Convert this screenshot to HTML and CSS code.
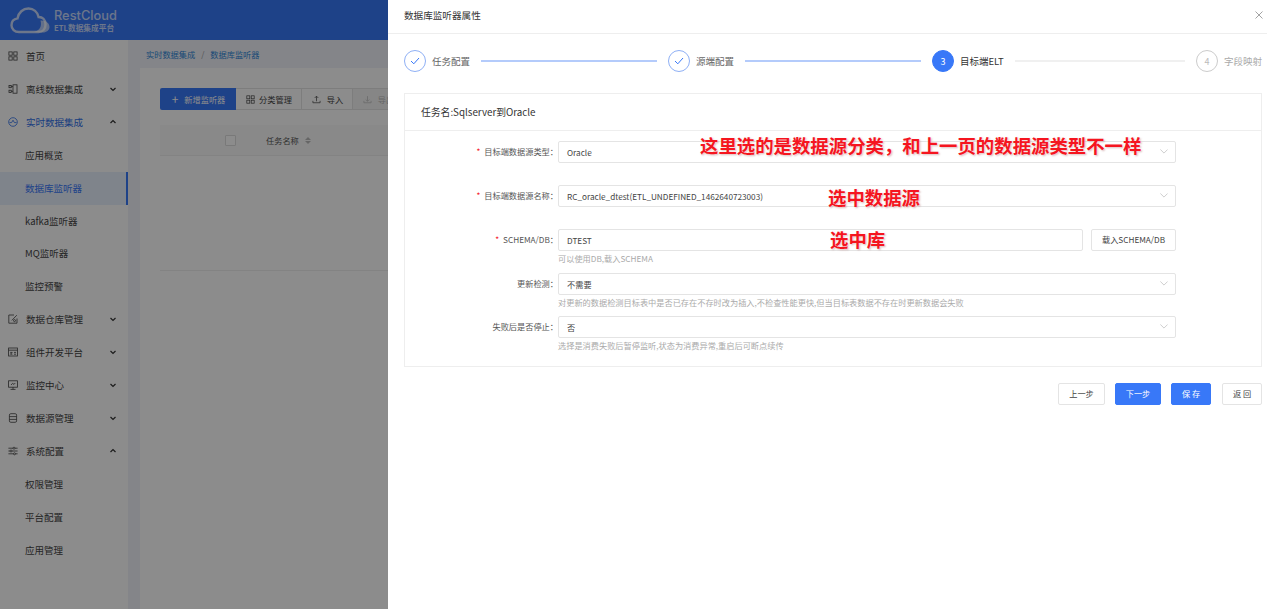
FILE: index.html
```html
<!DOCTYPE html>
<html lang="zh-CN">
<head>
    <meta charset="UTF-8">
    <meta name="viewport" content="width=device-width, initial-scale=1.0">
    <title>数据库监听器属性</title>
    <link rel="stylesheet" href="styles.css">
</head>
<body>
    <div class="app">
        <header class="topbar">
            <svg class="logo" width="40" height="27" viewBox="0 0 40 27" fill="none">
                <path d="M9 25C4.5 25 1.5 22 1.5 18.2C1.5 14.5 4 12 7.5 11.4C8.5 5.5 13 1.5 18.5 1.5C23.5 1.5 27.5 4.8 28.6 10C32.5 10 35.5 12.5 35.5 17.5C35.5 22 32.5 25 28.5 25Z" stroke="#fff" stroke-opacity=".72" stroke-width="2.4"/>
                <path d="M24 25C30 23.5 32 19 30.5 13.5C35.5 13 39.5 16 39.5 20C39.5 23 36.5 25.5 33 25.5Z" fill="#fff" fill-opacity=".62"/>
            </svg>
            <div class="brand">
                <div class="brand-name">RestCloud</div>
                <div class="brand-sub">ETL数据集成平台</div>
            </div>
        </header>
        <div class="layout">
            <nav class="sidebar">
                <a class="nav-item">
                    <svg class="nav-icon" viewBox="0 0 10 10" fill="none" stroke="currentColor" stroke-width=".8"><rect x=".9" y=".9" width="3.3" height="3.3"/><rect x="5.8" y=".9" width="3.3" height="3.3"/><rect x=".9" y="5.8" width="3.3" height="3.3"/><rect x="5.8" y="5.8" width="3.3" height="3.3"/></svg>
                    <span>首页</span>
                </a>
                <a class="nav-item">
                    <svg class="nav-icon" viewBox="0 0 10 10" fill="none" stroke="currentColor" stroke-width=".8"><rect x="5" y=".8" width="4" height="8.4"/><rect x="1" y="1.5" width="2.2" height="2.2"/><rect x="1" y="6.2" width="2.2" height="2.2"/><path d="M3.2 2.6H5M3.2 7.3H5"/></svg>
                    <span>离线数据集成</span>
                    <svg class="chevron" viewBox="0 0 8 8"><path d="M1.5 3L4 5.5L6.5 3"/></svg>
                </a>
                <a class="nav-item is-open">
                    <svg class="nav-icon" viewBox="0 0 10 10" fill="none" stroke="currentColor" stroke-width=".8"><circle cx="5" cy="5" r="4.3"/><path d="M1.5 5.6L3.6 5.6L5 3.2L6.4 5.6L8.5 5.6"/></svg>
                    <span>实时数据集成</span>
                    <svg class="chevron" viewBox="0 0 8 8"><path d="M1.5 5L4 2.5L6.5 5"/></svg>
                </a>
                <a class="nav-child">应用概览</a>
                <a class="nav-child is-active">数据库监听器</a>
                <a class="nav-child">kafka监听器</a>
                <a class="nav-child">MQ监听器</a>
                <a class="nav-child">监控预警</a>
                <a class="nav-item">
                    <svg class="nav-icon" viewBox="0 0 10 10" fill="none" stroke="currentColor" stroke-width=".8"><path d="M9 4.5V9.2H.8V1H6"/><path d="M3.8 6.4L8.8 1.2"/><circle cx="6.5" cy="6.6" r="1"/></svg>
                    <span>数据仓库管理</span>
                    <svg class="chevron" viewBox="0 0 8 8"><path d="M1.5 3L4 5.5L6.5 3"/></svg>
                </a>
                <a class="nav-item">
                    <svg class="nav-icon" viewBox="0 0 10 10" fill="none" stroke="currentColor" stroke-width=".8"><rect x=".6" y="1" width="8.8" height="8"/><path d="M.6 3.2H9.4M2.2 5.4H4.2L2.4 7.2H4.4M6 5.4H8M6 7.2H8"/></svg>
                    <span>组件开发平台</span>
                    <svg class="chevron" viewBox="0 0 8 8"><path d="M1.5 3L4 5.5L6.5 3"/></svg>
                </a>
                <a class="nav-item">
                    <svg class="nav-icon" viewBox="0 0 10 10" fill="none" stroke="currentColor" stroke-width=".8"><rect x=".6" y=".8" width="8.8" height="6.4"/><path d="M2.5 9.4H7.5M5 7.2V9.4M3 5L4.5 3.4L6 4.4L7.2 3"/></svg>
                    <span>监控中心</span>
                    <svg class="chevron" viewBox="0 0 8 8"><path d="M1.5 3L4 5.5L6.5 3"/></svg>
                </a>
                <a class="nav-item">
                    <svg class="nav-icon" viewBox="0 0 10 10" fill="none" stroke="currentColor" stroke-width=".8"><rect x="1.4" y=".7" width="7.2" height="8.6" rx="1.4"/><path d="M1.4 3.6H8.6M1.4 6.4H8.6"/></svg>
                    <span>数据源管理</span>
                    <svg class="chevron" viewBox="0 0 8 8"><path d="M1.5 3L4 5.5L6.5 3"/></svg>
                </a>
                <a class="nav-item">
                    <svg class="nav-icon" viewBox="0 0 10 10" fill="none" stroke="currentColor" stroke-width=".8"><path d="M.4 2.2H5M7 2.2H9.6M.4 5H2M4 5H9.6M.4 7.8H5.5M7.5 7.8H9.6"/><circle cx="6" cy="2.2" r="1"/><circle cx="3" cy="5" r="1"/><circle cx="6.5" cy="7.8" r="1"/></svg>
                    <span>系统配置</span>
                    <svg class="chevron" viewBox="0 0 8 8"><path d="M1.5 5L4 2.5L6.5 5"/></svg>
                </a>
                <a class="nav-child">权限管理</a>
                <a class="nav-child">平台配置</a>
                <a class="nav-child">应用管理</a>
            </nav>
            <main class="content">
                <div class="breadcrumb">
                    <span>实时数据集成</span>
                    <span class="crumb-sep">/</span>
                    <span>数据库监听器</span>
                </div>
                <section class="panel">
                    <div class="toolbar">
                        <button class="tool tool-primary"><span class="tool-plus">+</span>新增监听器</button>
                        <button class="tool">
                            <svg class="tool-icon" viewBox="0 0 10 10" fill="none" stroke="currentColor" stroke-width=".8"><rect x=".9" y=".9" width="3.3" height="3.3"/><rect x="5.8" y=".9" width="3.3" height="3.3"/><rect x=".9" y="5.8" width="3.3" height="3.3"/><rect x="5.8" y="5.8" width="3.3" height="3.3"/></svg>
                            分类管理
                        </button>
                        <button class="tool tool-import">
                            <svg class="tool-icon" viewBox="0 0 10 10" fill="none" stroke="currentColor" stroke-width=".8"><path d="M5 7V1.5M3 3.3L5 1.3L7 3.3M1 6.5V8.6H9V6.5"/></svg>
                            导入
                        </button>
                        <button class="tool tool-off">
                            <svg class="tool-icon" viewBox="0 0 10 10" fill="none" stroke="currentColor" stroke-width=".8"><path d="M5 1.2V6.8M3 5L5 7L7 5M1 6.5V8.6H9V6.5"/></svg>
                            导出
                        </button>
                    </div>
                    <div class="table-head">
                        <span class="checkbox"></span>
                        <span class="th-name">任务名称</span>
                        <span class="sorter"><i class="sort-up"></i><i class="sort-down"></i></span>
                    </div>
                    <div class="table-empty"></div>
                </section>
            </main>
        </div>
    </div>

    <div class="mask"></div>

    <aside class="drawer">
        <div class="drawer-head">
            <span>数据库监听器属性</span>
            <svg class="drawer-close" width="8" height="8" viewBox="0 0 8 8"><path d="M.5 .5L7.5 7.5M7.5 .5L.5 7.5"/></svg>
        </div>
        <div class="drawer-body">
            <div class="steps">
                <div class="step is-done">
                    <span class="step-dot"><svg width="10" height="8" viewBox="0 0 10 8" fill="none"><path d="M1 4L3.8 6.8L9 1"/></svg></span>
                    <span class="step-label">任务配置</span>
                    <span class="step-line"></span>
                </div>
                <div class="step is-done">
                    <span class="step-dot"><svg width="10" height="8" viewBox="0 0 10 8" fill="none"><path d="M1 4L3.8 6.8L9 1"/></svg></span>
                    <span class="step-label">源端配置</span>
                    <span class="step-line"></span>
                </div>
                <div class="step is-current">
                    <span class="step-dot">3</span>
                    <span class="step-label">目标端ELT</span>
                    <span class="step-line"></span>
                </div>
                <div class="step is-todo">
                    <span class="step-dot">4</span>
                    <span class="step-label">字段映射</span>
                </div>
            </div>

            <section class="form-card">
                <div class="form-title">任务名:Sqlserver到Oracle</div>
                <div class="form-body">
                    <div class="form-row">
                        <label class="form-label required">目标端数据源类型：</label>
                        <div class="form-control">
                            <div class="select">Oracle<svg class="select-arrow" viewBox="0 0 10 6"><path d="M.5 .5L5 5L9.5 .5"/></svg></div>
                        </div>
                    </div>
                    <div class="form-row">
                        <label class="form-label required">目标端数据源名称：</label>
                        <div class="form-control">
                            <div class="select">RC_oracle_dtest(ETL_UNDEFINED_1462640723003)<svg class="select-arrow" viewBox="0 0 10 6"><path d="M.5 .5L5 5L9.5 .5"/></svg></div>
                        </div>
                    </div>
                    <div class="form-row">
                        <label class="form-label required">SCHEMA/DB：</label>
                        <div class="form-control">
                            <div class="input-group">
                                <div class="select">DTEST</div>
                                <button class="btn btn-load">载入SCHEMA/DB</button>
                            </div>
                            <div class="hint">可以使用DB,载入SCHEMA</div>
                        </div>
                    </div>
                    <div class="form-row form-row-short">
                        <label class="form-label">更新检测：</label>
                        <div class="form-control">
                            <div class="select">不需要<svg class="select-arrow" viewBox="0 0 10 6"><path d="M.5 .5L5 5L9.5 .5"/></svg></div>
                            <div class="hint">对更新的数据检测目标表中是否已存在不存时改为插入,不检查性能更快,但当目标表数据不存在时更新数据会失败</div>
                        </div>
                    </div>
                    <div class="form-row">
                        <label class="form-label">失败后是否停止：</label>
                        <div class="form-control">
                            <div class="select">否<svg class="select-arrow" viewBox="0 0 10 6"><path d="M.5 .5L5 5L9.5 .5"/></svg></div>
                            <div class="hint">选择是消费失败后暂停监听,状态为消费异常,重启后可断点续传</div>
                        </div>
                    </div>
                </div>
            </section>

            <div class="form-actions">
                <button class="btn btn-prev">上一步</button>
                <button class="btn btn-primary btn-next">下一步</button>
                <button class="btn btn-primary btn-short">保 存</button>
                <button class="btn btn-short btn-back">返 回</button>
            </div>
        </div>

        <div class="note note-type">这里选的是数据源分类，和上一页的数据源类型不一样</div>
        <div class="note note-source">选中数据源</div>
        <div class="note note-db">选中库</div>
    </aside>
</body>
</html>
```

FILE: styles.css
```css
/* Base */
* {
    box-sizing: border-box;
}

html, body {
    height: 100%;
}

body {
    margin: 0;
    overflow: hidden;
    background: #fff;
    color: #333;
    font-family: "Noto Sans CJK SC", "Noto Sans", sans-serif;
    font-size: 8px;
}

button {
    font-family: inherit;
    cursor: pointer;
}

/* Page behind the drawer */
.app {
    height: 100%;
    display: flex;
    flex-direction: column;
}

.topbar {
    height: 40px;
    flex: none;
    display: flex;
    align-items: center;
    padding-left: 10px;
    background: #3878f8;
}

.logo {
    flex: none;
}

.brand {
    margin-left: 4px;
    color: rgba(255, 255, 255, .72);
}

.brand-name {
    font-family: "Inter", "Noto Sans", sans-serif;
    font-size: 12.8px;
    font-weight: 500;
    line-height: 15px;
}

.brand-sub {
    font-size: 7.7px;
    font-weight: 700;
    line-height: 10px;
}

.layout {
    flex: 1;
    display: flex;
    min-height: 0;
}

.sidebar {
    width: 128px;
    flex: none;
    background: #fff;
    font-size: 9.5px;
    color: #444;
}

.nav-item,
.nav-child {
    height: 32.93px;
    display: flex;
    align-items: center;
    padding-bottom: 1px;
}

.nav-item {
    padding-left: 8px;
}

.nav-item span {
    margin-left: 8px;
}

.nav-icon {
    width: 10px;
    height: 10px;
    flex: none;
}

.chevron {
    width: 8px;
    height: 8px;
    margin-left: auto;
    margin-right: 11px;
    fill: none;
    stroke: #333;
    stroke-width: 1.2;
}

.nav-item.is-open {
    color: #2f6fe8;
}

.nav-child {
    padding-left: 25px;
}

.nav-child.is-active {
    background: #e8f0fe;
    border-right: 2px solid #3878f8;
    color: #3878f8;
}

.content {
    flex: 1;
    min-width: 0;
    background: #f0f3f9;
    padding-left: 12px;
}

.breadcrumb {
    height: 28px;
    display: flex;
    align-items: center;
    gap: 6px;
    padding: 0 0 1px 6px;
    font-size: 8.2px;
    color: #2f86d8;
}

.crumb-sep {
    color: #999;
}

.panel {
    height: 100%;
    background: #fff;
    padding: 20px 0 0 20px;
}

.toolbar {
    display: flex;
    height: 22px;
}

.tool {
    width: 66px;
    height: 22px;
    flex: none;
    display: flex;
    align-items: center;
    justify-content: center;
    gap: 4px;
    padding: 0 0 0 1px;
    border: 1px solid #e4e4e4;
    border-left: 0;
    background: #fff;
    color: #444;
    font-size: 8.2px;
}

.tool-primary {
    width: 76px;
    border: 0;
    border-radius: 2px 0 0 2px;
    background: #3878f8;
    color: #fff;
    gap: 6px;
}

.tool-plus {
    font-size: 12px;
    line-height: 1;
}

.tool-import {
    width: 51px;
    gap: 6px;
}

.tool-off {
    width: 51px;
    background: #f5f5f5;
    color: #bbb;
    gap: 6px;
}

.tool-icon {
    width: 9px;
    height: 9px;
}

.table-head {
    height: 31px;
    margin-top: 15px;
    display: flex;
    align-items: center;
    background: #fafafa;
    border-bottom: 1px solid #eee;
    font-size: 8.2px;
    color: #555;
}

.checkbox {
    width: 11px;
    height: 11px;
    margin-left: 65px;
    background: #fff;
    border: 1px solid #ddd;
    border-radius: 1px;
}

.th-name {
    margin-left: 30px;
}

.sorter {
    margin-left: 6px;
    display: flex;
    flex-direction: column;
    gap: 1px;
}

.sort-up,
.sort-down {
    width: 0;
    height: 0;
    border-left: 3px solid transparent;
    border-right: 3px solid transparent;
}

.sort-up {
    border-bottom: 3px solid #bbb;
}

.sort-down {
    border-top: 3px solid #bbb;
}

.table-empty {
    height: 115px;
    border-bottom: 1px solid #eee;
}

/* Dim layer, sits on top of the page */
.mask {
    position: fixed;
    inset: 0;
    background: rgba(0, 0, 0, .45);
}

/* Drawer */
.drawer {
    position: fixed;
    top: 0;
    right: 0;
    bottom: 0;
    width: 879px;
    background: #fff;
}

.drawer-head {
    height: 34px;
    display: flex;
    align-items: center;
    justify-content: space-between;
    padding: 0 4px 4px 16px;
    border-bottom: 1px solid #eee;
    font-size: 9.6px;
    color: #333;
}

.drawer-close {
    fill: none;
    stroke: #999;
    stroke-width: .9;
}

.drawer-body {
    padding: 16px 5px 0 16px;
}

.steps {
    display: flex;
    height: 22px;
}

.step {
    flex: 1;
    display: flex;
    align-items: center;
    font-size: 9.5px;
}

.step:last-child {
    flex: none;
    width: 66px;
}

.step-dot {
    width: 22px;
    height: 22px;
    flex: none;
    display: flex;
    align-items: center;
    justify-content: center;
    border-radius: 50%;
    border: 1px solid #8fb0f5;
    font-size: 9px;
}

.step-dot svg {
    stroke: #3878f8;
    stroke-width: 1;
}

.step-label {
    margin-left: 6px;
    color: #666;
}

.step-line {
    flex: 1;
    height: 2px;
    margin: 0 11px;
    background: #b4cbfb;
}

.is-current .step-dot {
    border-color: #3878f8;
    background: #3878f8;
    color: #fff;
}

.is-current .step-label {
    color: #333;
}

.is-current .step-line {
    background: #f0f0f0;
}

.is-todo .step-dot {
    border-color: #ccc;
    color: #bbb;
}

.is-todo .step-label {
    color: #aaa;
}

.form-card {
    height: 274px;
    margin-top: 21px;
    border: 1px solid #eee;
}

.form-title {
    height: 37px;
    display: flex;
    align-items: center;
    padding-left: 16px;
    border-bottom: 1px solid #eee;
    font-size: 9.8px;
    color: #333;
}

.form-body {
    padding-top: 10px;
}

.form-row {
    height: 44px;
    display: flex;
    align-items: flex-start;
}

.form-row-short {
    height: 43px;
}

.form-label {
    width: 153px;
    height: 22px;
    flex: none;
    display: flex;
    align-items: center;
    justify-content: flex-end;
    padding-bottom: 2px;
    font-size: 8.2px;
    color: #555;
}

.form-label.required::before {
    content: "*";
    margin-right: 4px;
    color: #f5222d;
}

.form-control {
    width: 618px;
    flex: none;
}

.select {
    height: 22px;
    flex: 1;
    display: flex;
    align-items: center;
    justify-content: space-between;
    padding: 0 7px 1px 8px;
    border: 1px solid #e4e4e4;
    border-radius: 2px;
    font-size: 8.2px;
    color: #444;
}

.select-arrow {
    width: 8px;
    height: 5px;
    fill: none;
    stroke: #bbb;
    stroke-width: .9;
}

.input-group {
    display: flex;
    gap: 8px;
}

.hint {
    margin-top: 1px;
    font-size: 8.2px;
    line-height: 12px;
    color: #aaa;
}

.btn {
    height: 22px;
    flex: none;
    padding: 0 0 2px;
    border: 1px solid #e4e4e4;
    border-radius: 2px;
    background: #fff;
    color: #444;
    font-size: 8.2px;
}

.btn-load {
    width: 85px;
}

.btn-primary {
    border-color: #3878f8;
    background: #3878f8;
    color: #fff;
}

.form-actions {
    display: flex;
    justify-content: flex-end;
    gap: 10px;
    margin-top: 16px;
}

.btn-prev {
    width: 47px;
}

.btn-next {
    width: 46px;
}

.btn-short {
    width: 40px;
}

.btn-back {
    margin-left: 1px;
}

/* Red notes drawn over the form */
.note {
    position: absolute;
    color: #f5151f;
    font-size: 18.4px;
    font-weight: 700;
    line-height: 24px;
    white-space: nowrap;
    text-shadow: 0 0 3px rgba(255, 255, 255, .9), 1px 1px 2px rgba(120, 0, 0, .35);
}

.note-type {
    top: 133px;
    left: 312px;
}

.note-source {
    top: 185px;
    left: 440px;
}

.note-db {
    top: 227px;
    left: 442px;
}
```
